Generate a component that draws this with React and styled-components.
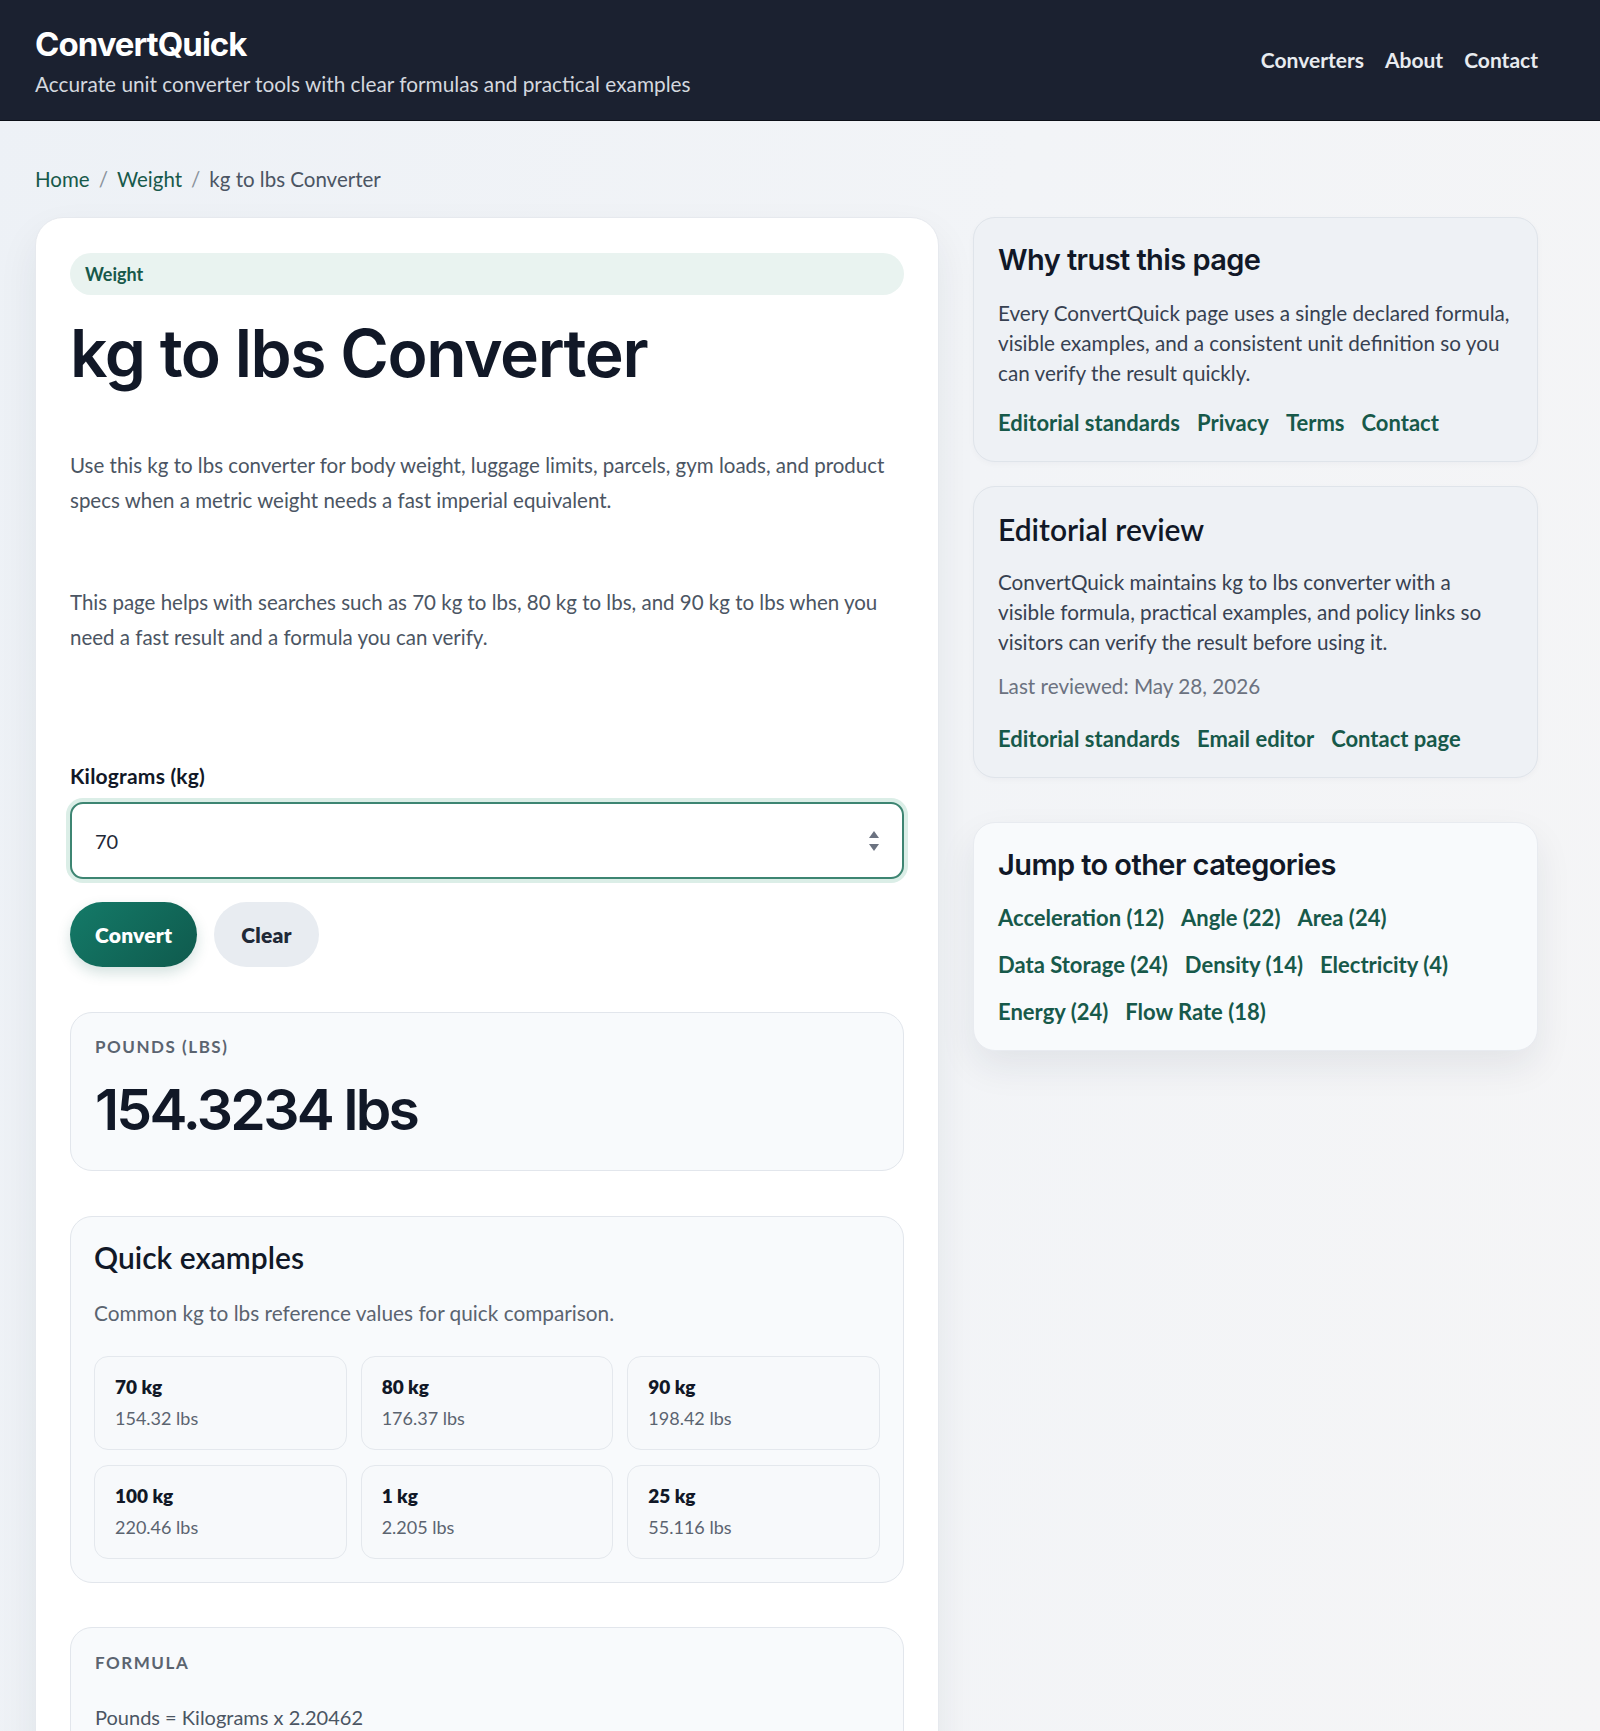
import React, { useState } from "react";
import styled, { createGlobalStyle } from "styled-components";

const GlobalStyle = createGlobalStyle`
  html, body {
    margin: 0;
    padding: 0;
  }
  body {
    min-height: 1731px;
    font-family: Lato, "Noto Sans", sans-serif;
    color: #111827;
    background: linear-gradient(100deg, #edf1f6 0%, #f2f4f7 55%, #f5f5f6 100%);
  }
  * {
    box-sizing: border-box;
  }
`;

const display = `Inter, "Noto Sans", sans-serif`;

const Header = styled.header`
  display: flex;
  justify-content: space-between;
  align-items: center;
  height: 121px;
  padding: 4px 62px 0 35px;
  background: #1b2130;
  border-bottom: 1px solid #0b0f17;
`;

const Brand = styled.div`
  display: flex;
  flex-direction: column;
  gap: 8px;
`;

const Logo = styled.a`
  font-family: ${display};
  font-size: 33px;
  font-weight: 700;
  letter-spacing: -0.03em;
  line-height: 36px;
  color: #ffffff;
  text-decoration: none;
`;

const Tagline = styled.p`
  margin: 0;
  font-size: 20.8px;
  line-height: 28px;
  color: #d4d8df;
`;

const Nav = styled.nav`
  display: flex;
  gap: 21px;
  margin-top: -6px;
`;

const NavLink = styled.a`
  font-size: 21px;
  font-weight: 700;
  color: #e8ebef;
  text-decoration: none;
`;

const Page = styled.main`
  padding: 44px 62px 0 35px;
`;

const Crumbs = styled.div`
  display: flex;
  align-items: center;
  gap: 9px;
  font-size: 20.5px;
  line-height: 28px;
  color: #4b5563;
`;

const CrumbLink = styled.a`
  color: #17594a;
  text-decoration: none;
`;

const Sep = styled.span`
  color: #8a929c;
`;

const Layout = styled.div`
  display: grid;
  grid-template-columns: minmax(0, 1.6fr) minmax(0, 1fr);
  gap: 34px;
  margin-top: 24px;
  align-items: start;
`;

const MainCard = styled.section`
  display: flex;
  flex-direction: column;
  padding: 35px 34px 40px;
  background: #ffffff;
  border: 1px solid #e6e9ee;
  border-radius: 28px;
  box-shadow: 0 18px 40px rgba(30, 41, 59, 0.07);
`;

const Pill = styled.div`
  height: 42px;
  display: flex;
  align-items: center;
  padding: 0 15px;
  border-radius: 999px;
  background: #e9f3f0;
  color: #17594a;
  font-size: 18px;
  font-weight: 700;
`;

const Title = styled.h1`
  margin: 23px 0 0;
  font-family: ${display};
  font-size: 66px;
  line-height: 70px;
  font-weight: 600;
  letter-spacing: -0.022em;
  color: #111827;
`;

const Lead = styled.p`
  margin: ${(p) => p.$top}px 0 0;
  font-size: 20.5px;
  line-height: 35px;
  color: #4b5563;
`;

const Label = styled.label`
  margin-top: 107px;
  font-size: 21px;
  font-weight: 700;
  line-height: 28px;
  color: #111827;
  letter-spacing: 0.01em;
`;

const Field = styled.div`
  display: flex;
  align-items: center;
  height: 77px;
  margin-top: 12px;
  padding: 0 22px 0 21px;
  border: 2px solid #3d8572;
  border-radius: 13px;
  background: #ffffff;
  box-shadow: 0 0 0 4px #dbeee7;
`;

const NumberInput = styled.input`
  flex: 1;
  border: 0;
  outline: none;
  background: transparent;
  font-family: Lato, "Noto Sans", sans-serif;
  font-size: 20px;
  color: #1f2937;
`;

const Spinner = styled.svg`
  flex: none;
  color: #6b7280;
`;

const Actions = styled.div`
  display: flex;
  gap: 17px;
  margin-top: 23px;
`;

const Button = styled.button`
  height: 65px;
  padding: 0 ${(p) => (p.$primary ? 25 : 27)}px;
  border: 0;
  border-radius: 999px;
  font-family: Lato, "Noto Sans", sans-serif;
  font-size: 21px;
  font-weight: 800;
  letter-spacing: 0.01em;
  cursor: pointer;
  color: ${(p) => (p.$primary ? "#ffffff" : "#1f2937")};
  background: ${(p) =>
    p.$primary ? "linear-gradient(135deg, #147a68, #0f5a4d)" : "#e8ecf1"};
  box-shadow: ${(p) =>
    p.$primary ? "0 6px 14px rgba(15, 90, 77, 0.18)" : "none"};
`;

const Panel = styled.div`
  margin-top: ${(p) => p.$top}px;
  padding: ${(p) => p.$pad};
  background: #f8fafc;
  border: 1px solid #e2e6ec;
  border-radius: 22px;
`;

const Eyebrow = styled.div`
  font-size: 17px;
  line-height: 20px;
  font-weight: 700;
  letter-spacing: 0.09em;
  text-transform: uppercase;
  color: #5b6470;
`;

const Result = styled.div`
  margin-top: 22px;
  font-family: ${display};
  font-size: 57px;
  line-height: 62px;
  font-weight: 600;
  letter-spacing: -0.048em;
  color: #111827;
`;

const PanelTitle = styled.h2`
  margin: 0;
  font-size: 30px;
  line-height: 34px;
  font-weight: 600;
  color: #111827;
`;

const Muted = styled.p`
  margin: ${(p) => p.$top || 0}px 0 0;
  font-size: 20.8px;
  line-height: 28px;
  color: #5b6470;
`;

const ExampleGrid = styled.div`
  display: grid;
  grid-template-columns: repeat(3, minmax(0, 1fr));
  gap: 15px 14px;
  margin-top: 29px;
`;

const Tile = styled.div`
  padding: 18px 20px;
  border: 1px solid #e4e8ed;
  border-radius: 14px;
  background: #f7f9fb;
`;

const TileHead = styled.div`
  font-size: 19px;
  line-height: 24px;
  font-weight: 800;
  color: #111827;
`;

const TileValue = styled.div`
  margin-top: 6px;
  font-size: 18px;
  line-height: 26px;
  color: #5b6470;
`;

const Formula = styled.div`
  margin-top: 30px;
  font-size: 20px;
  line-height: 28px;
  color: #4b5563;
`;

const Aside = styled.aside`
  display: flex;
  flex-direction: column;
  gap: 24px;
`;

const SideCard = styled.section`
  margin-top: ${(p) => p.$top || 0}px;
  padding: 25px 24px 24px;
  border-radius: 22px;
  border: 1px solid ${(p) => (p.$bright ? "#e8ebf0" : "#dfe4ea")};
  background: ${(p) => (p.$bright ? "#f8fafc" : "#eef1f5")};
  box-shadow: ${(p) =>
    p.$bright
      ? "0 16px 36px rgba(30, 41, 59, 0.08)"
      : "0 2px 6px rgba(30, 41, 59, 0.03)"};
`;

const SideTitle = styled.h3`
  margin: 0;
  font-family: ${(p) => (p.$plain ? `Lato, "Noto Sans", sans-serif` : display)};
  font-size: ${(p) => (p.$plain ? 30 : 29)}px;
  line-height: 34px;
  font-weight: 600;
  letter-spacing: ${(p) => (p.$plain ? "0" : "-0.02em")};
  color: #111827;
`;

const SideText = styled.p`
  max-width: 513px;
  margin: 21px 0 0;
  font-size: 20.7px;
  line-height: 30px;
  color: #374151;
`;

const Reviewed = styled.p`
  margin: 14px 0 0;
  font-size: 20.7px;
  line-height: 30px;
  color: #6b7280;
`;

const LinkRow = styled.div`
  display: flex;
  flex-wrap: wrap;
  gap: ${(p) => (p.$rows ? "19px 17px" : "0 17px")};
  margin-top: ${(p) => p.$top}px;
`;

const GreenLink = styled.a`
  font-size: 22px;
  line-height: 28px;
  font-weight: 700;
  color: #17594a;
  text-decoration: none;
`;

const examples = [
  ["70 kg", "154.32 lbs"],
  ["80 kg", "176.37 lbs"],
  ["90 kg", "198.42 lbs"],
  ["100 kg", "220.46 lbs"],
  ["1 kg", "2.205 lbs"],
  ["25 kg", "55.116 lbs"],
];

const categories = [
  "Acceleration (12)",
  "Angle (22)",
  "Area (24)",
  "Data Storage (24)",
  "Density (14)",
  "Electricity (4)",
  "Energy (24)",
  "Flow Rate (18)",
];

export default function App() {
  const [kg, setKg] = useState("70");
  const [lbs, setLbs] = useState(70 * 2.20462);

  const convert = () => {
    const n = parseFloat(kg);
    setLbs(isNaN(n) ? 0 : n * 2.20462);
  };

  return (
    <>
      <GlobalStyle />
      <Header>
        <Brand>
          <Logo href="#">ConvertQuick</Logo>
          <Tagline>
            Accurate unit converter tools with clear formulas and practical examples
          </Tagline>
        </Brand>
        <Nav>
          <NavLink href="#">Converters</NavLink>
          <NavLink href="#">About</NavLink>
          <NavLink href="#">Contact</NavLink>
        </Nav>
      </Header>

      <Page>
        <Crumbs>
          <CrumbLink href="#">Home</CrumbLink>
          <Sep>/</Sep>
          <CrumbLink href="#">Weight</CrumbLink>
          <Sep>/</Sep>
          <span>kg to lbs Converter</span>
        </Crumbs>

        <Layout>
          <MainCard>
            <Pill>Weight</Pill>
            <Title>kg to lbs Converter</Title>
            <Lead $top={60}>
              Use this kg to lbs converter for body weight, luggage limits, parcels,
              gym loads, and product specs when a metric weight needs a fast imperial
              equivalent.
            </Lead>
            <Lead $top={67}>
              This page helps with searches such as 70 kg to lbs, 80 kg to lbs, and 90
              kg to lbs when you need a fast result and a formula you can verify.
            </Lead>

            <Label htmlFor="kg">Kilograms (kg)</Label>
            <Field>
              <NumberInput
                id="kg"
                value={kg}
                onChange={(e) => setKg(e.target.value)}
              />
              <Spinner width="12" height="26" viewBox="0 0 12 26">
                <path d="M6 3 L11 10 H1 Z" fill="currentColor" />
                <path d="M6 23 L11 16 H1 Z" fill="currentColor" />
              </Spinner>
            </Field>

            <Actions>
              <Button $primary onClick={convert}>
                Convert
              </Button>
              <Button onClick={() => setKg("")}>Clear</Button>
            </Actions>

            <Panel $top={45} $pad="24px 24px 29px">
              <Eyebrow>Pounds (lbs)</Eyebrow>
              <Result>{lbs.toFixed(4)} lbs</Result>
            </Panel>

            <Panel $top={45} $pad="23px 23px 23px">
              <PanelTitle>Quick examples</PanelTitle>
              <Muted $top={25}>Common kg to lbs reference values for quick comparison.</Muted>
              <ExampleGrid>
                {examples.map(([a, b]) => (
                  <Tile key={a}>
                    <TileHead>{a}</TileHead>
                    <TileValue>{b}</TileValue>
                  </Tile>
                ))}
              </ExampleGrid>
            </Panel>

            <Panel $top={44} $pad="25px 24px 40px">
              <Eyebrow>Formula</Eyebrow>
              <Formula>Pounds = Kilograms x 2.20462</Formula>
            </Panel>
          </MainCard>

          <Aside>
            <SideCard>
              <SideTitle>Why trust this page</SideTitle>
              <SideText>
                Every ConvertQuick page uses a single declared formula, visible
                examples, and a consistent unit definition so you can verify the
                result quickly.
              </SideText>
              <LinkRow $top={21}>
                <GreenLink href="#">Editorial standards</GreenLink>
                <GreenLink href="#">Privacy</GreenLink>
                <GreenLink href="#">Terms</GreenLink>
                <GreenLink href="#">Contact</GreenLink>
              </LinkRow>
            </SideCard>

            <SideCard>
              <SideTitle $plain>Editorial review</SideTitle>
              <SideText>
                ConvertQuick maintains kg to lbs converter with a visible formula,
                practical examples, and policy links so visitors can verify the
                result before using it.
              </SideText>
              <Reviewed>Last reviewed: May 28, 2026</Reviewed>
              <LinkRow $top={24}>
                <GreenLink href="#">Editorial standards</GreenLink>
                <GreenLink href="#">Email editor</GreenLink>
                <GreenLink href="#">Contact page</GreenLink>
              </LinkRow>
            </SideCard>

            <SideCard $bright $top={20}>
              <SideTitle>Jump to other categories</SideTitle>
              <LinkRow $rows $top={22}>
                {categories.map((c) => (
                  <GreenLink key={c} href="#">
                    {c}
                  </GreenLink>
                ))}
              </LinkRow>
            </SideCard>
          </Aside>
        </Layout>
      </Page>
    </>
  );
}
